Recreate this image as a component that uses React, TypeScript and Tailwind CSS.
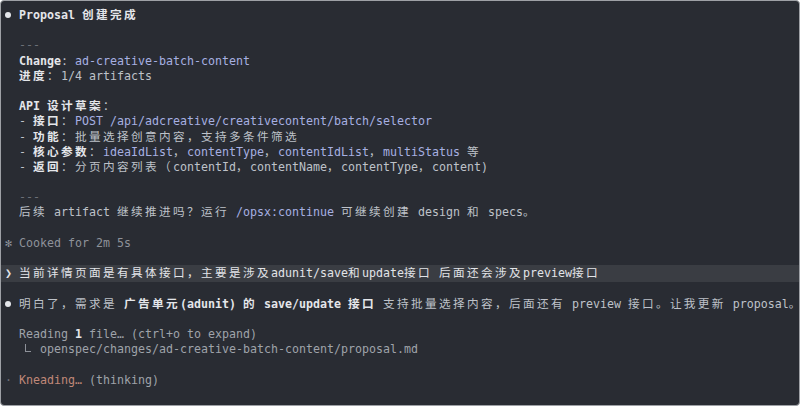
import React from "react";

const CJK = /([\u2E80-\u9FFF\u3000-\u303F\uFF00-\uFFEF]+)/g;

function W({ t }: { t: string }) {
  const parts = t.split(CJK);
  return (
    <>
      {parts.map((s, i) =>
        i % 2 === 1 ? (
          <span key={i} className="tracking-[2.37px]">
            {s}
          </span>
        ) : (
          <React.Fragment key={i}>{s}</React.Fragment>
        )
      )}
    </>
  );
}

function S({ t, c }: { t: string; c?: string }) {
  return (
    <span className={c}>
      <W t={t} />
    </span>
  );
}

const Line = ({ children, className = "" }: { children?: React.ReactNode; className?: string }) => (
  <div className={"h-[15.2px] whitespace-pre " + className}>{children}</div>
);

const Bullet = () => (
  <span className="inline-block w-[14px]">
    <span className="inline-block w-[6px] h-[6px] rounded-full bg-[#e4e6ea] align-[1px]"></span>
  </span>
);

const B = "font-bold text-[#e4e6ea]";
const N = "text-[#bec2c9]";
const BL = "text-[#a7b0e2]";
const D = "text-[#6c7078]";

export default function App() {
  return (
    <div className="w-[800px] h-[406px] overflow-hidden bg-[#292c33] border border-[#9ea1a6] rounded-[4px] pt-[7px] pl-[4px] font-['DejaVu_Sans_Mono','Noto_Sans_CJK_SC',monospace] text-[11.63px] leading-[15.2px] text-[#bec2c9]">
      <Line>
        <Bullet />
        <S t="Proposal 创建完成" c={B} />
      </Line>
      <Line />
      <Line>
        <span className={D}>{"  ---"}</span>
      </Line>
      <Line>
        {"  "}
        <S t="Change" c={B} />
        <S t=": " c={N} />
        <S t="ad-creative-batch-content" c={BL} />
      </Line>
      <Line>
        {"  "}
        <S t="进度" c={B} />
        <S t="：1/4 artifacts" c={N} />
      </Line>
      <Line />
      <Line>
        {"  "}
        <S t="API 设计草案" c={B} />
        <S t="：" c={N} />
      </Line>
      <Line>
        {"  - "}
        <S t="接口" c={B} />
        <S t="：" c={N} />
        <S t="POST /api/adcreative/creativecontent/batch/selector" c={BL} />
      </Line>
      <Line>
        {"  - "}
        <S t="功能" c={B} />
        <S t="：批量选择创意内容，支持多条件筛选" c={N} />
      </Line>
      <Line>
        {"  - "}
        <S t="核心参数" c={B} />
        <S t="：" c={N} />
        <S t="ideaIdList" c={BL} />
        <S t="，" c={N} />
        <S t="contentType" c={BL} />
        <S t="，" c={N} />
        <S t="contentIdList" c={BL} />
        <S t="，" c={N} />
        <S t="multiStatus" c={BL} />
        <S t=" 等" c={N} />
      </Line>
      <Line>
        {"  - "}
        <S t="返回" c={B} />
        <S t="：分页内容列表（contentId，contentName，contentType，content)" c={N} />
      </Line>
      <Line />
      <Line>
        <span className={D}>{"  ---"}</span>
      </Line>
      <Line>
        {"  "}
        <S t="后续 artifact 继续推进吗？运行 " c={N} />
        <S t="/opsx:continue" c={BL} />
        <S t=" 可继续创建 design 和 specs。" c={N} />
      </Line>
      <Line />
      <Line className="text-[#8e929a]">
        <span className="inline-block w-[14px]">✻</span>
        {"Cooked for 2m 5s"}
      </Line>
      <Line />
      <div className="h-[17.2px] -my-[1px] py-[1px] -ml-[4px] pl-[4px] whitespace-pre bg-[#3a3d43] text-[#e2e4e8]">
        <span className="inline-block w-[14px] font-bold">❯</span>
        <W t="当前详情页面是有具体接口，主要是涉及adunit/save和update接口 后面还会涉及preview接口" />
      </div>
      <Line />
      <Line>
        <Bullet />
        <S t="明白了，需求是 " c={N} />
        <S t="广告单元(adunit) 的 save/update 接口" c={B} />
        <S t=" 支持批量选择内容，后面还有 preview 接口。让我更新 proposal。" c={N} />
      </Line>
      <Line />
      <Line className="text-[#9fa3aa]">
        {"  Reading "}
        <span className={B}>1</span>
        {" file… (ctrl+o to expand)"}
      </Line>
      <Line className="text-[#9fa3aa]">
        {"   "}
        <span className="inline-block w-[7px] h-[15.2px] align-top">
          <span className="block w-[6px] h-[8px] mt-[2px] -ml-[1px] border-l border-b border-[#8e929a]"></span>
        </span>
        {" openspec/changes/ad-creative-batch-content/proposal.md"}
      </Line>
      <Line />
      <Line>
        <span className="inline-block w-[14px] text-[#6c7078]">·</span>
        <span className="text-[#c08878]">Kneading…</span>
        <span className="text-[#9fa3aa]"> (thinking)</span>
      </Line>
    </div>
  );
}
